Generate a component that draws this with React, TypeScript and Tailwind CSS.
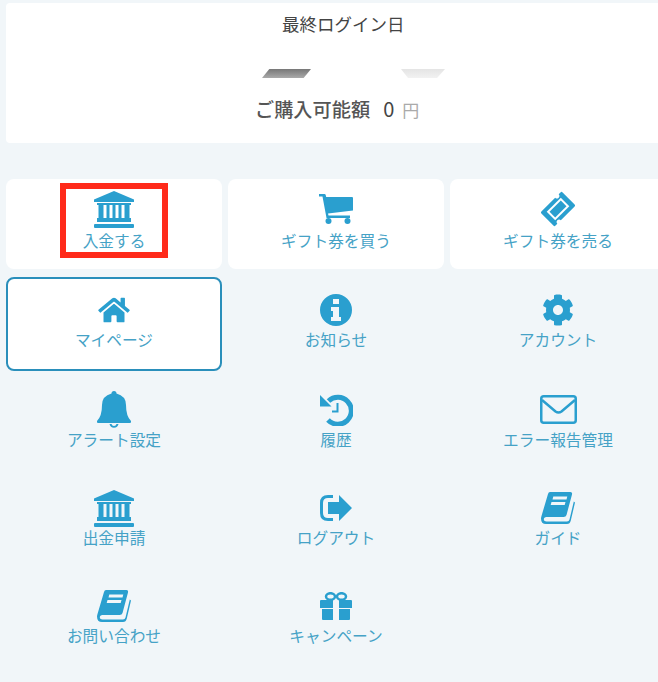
import type { ReactNode } from "react";
import { FaCog, FaHome } from "react-icons/fa";

const UniversityIcon = () => (
  <svg viewBox="0 0 40 37" className="h-[37px] w-[40px] fill-[#2a9fcf]">
    <path d="M20 0 40 8.500V11H0V8.500Z" />
    <path
      fillRule="evenodd"
      d="M3 12H37V14H35.500V27H37V31H3V27H4.500V14H3ZM9.500 14V27H12.500V14ZM15.500 14V27H18.500V14ZM21.500 14V27H24.500V14ZM27.500 14V27H30.500V14Z"
    />
    <rect x="0" y="33" width="40" height="4" rx="1" />
  </svg>
);

const CartIcon = () => (
  <svg viewBox="0 0 34 30" className="h-[30px] w-[34px] fill-[#2a9fcf]">
    <path d="M0 0H5.500Q6.500 0 6.700 1L7.200 3H33Q34 3 34 4V16.500L9 19.500 9.500 21.500H31V24H7.500L3.500 2.500H0Z" />
    <circle cx="9.500" cy="27" r="3" />
    <circle cx="28.500" cy="27" r="3" />
  </svg>
);

const TicketIcon = () => (
  <svg viewBox="0 0 36 36" className="h-[36px] w-[36px]">
    <g transform="rotate(-45 18 18)">
      <path
        d="M3 9.500A1.500 1.500 0 0 1 4.500 8H24a2.500 2.500 0 0 0 5 0H31.500A1.500 1.500 0 0 1 33 9.500V26.500A1.500 1.500 0 0 1 31.500 28H12a2.500 2.500 0 0 0-5 0H4.500A1.500 1.500 0 0 1 3 26.500Z"
        className="fill-[#2a9fcf]"
      />
      <rect x="8" y="12" width="20" height="12" className="fill-[#ffffff]" />
      <rect x="10" y="14" width="16" height="8" className="fill-[#2a9fcf]" />
    </g>
  </svg>
);

const BookIcon = () => (
  <svg viewBox="0 0 34 32" className="h-[32px] w-[34px] fill-[#2a9fcf]">
    <path
      fillRule="evenodd"
      d="M9 0H29.500Q31.500 0 31 2.500L25.500 23Q25 25 22.500 25H5.500Q2.800 25 2.800 27.500 2.800 29.500 5.500 29.500H26Q28 29.500 28.500 27.500L32.800 9.500 34 10.500 29.800 28.500Q29 32 26 32H5Q0 32 0 26.500 0 25.500 .5 24L7 2Q7.500 0 9 0ZM12.300 4.500 11.500 7.500H25.500L26.300 4.500ZM10.500 10 9.700 13H23.700L24.500 10Z"
    />
  </svg>
);

const SignOutIcon = () => (
  <svg viewBox="0 0 32 26" className="h-[26px] w-[32px] fill-[#2a9fcf]">
    <path d="M8 0H13V3H8Q3 3 3 8V18Q3 23 8 23H13V26H8Q0 26 0 18V8Q0 0 8 0Z" />
    <path d="M19 0 32 13 19 26V19H8V7H19Z" />
  </svg>
);

const EnvelopeIcon = () => (
  <svg viewBox="0 0 37 29" className="h-[29px] w-[37px] fill-none stroke-[#2a9fcf]">
    <rect x="1.250" y="1.250" width="34.500" height="26.500" rx="2.500" strokeWidth="2.500" />
    <path d="M2 5 15.500 16.500Q18.500 18.500 21.500 16.500L35 5" strokeWidth="2.500" />
  </svg>
);

const InfoIcon = () => (
  <svg viewBox="0 0 32 32" className="h-[32px] w-[32px] fill-[#2a9fcf]">
    <path
      fillRule="evenodd"
      d="M16 0A16 16 0 1 1 16 32 16 16 0 0 1 16 0ZM13 5V10H19V5ZM11 13V17H13V23H11V27H21V23H19V13Z"
    />
  </svg>
);

const BellIcon = () => (
  <svg viewBox="0 0 34 37" className="h-[37px] w-[34px] fill-[#2a9fcf]">
    <path d="M17 0A2.500 2.500 0 0 1 19.500 2.500Q29 5 29 14 29 25 34 30V31Q34 32 33 32H1Q0 32 0 31V30Q5 25 5 14 5 5 14.500 2.500A2.500 2.500 0 0 1 17 0Z" />
    <path d="M12.500 33H14.500A2.600 2.600 0 0 0 19.500 33H21.500A4.600 4.600 0 0 1 12.500 33Z" />
  </svg>
);

const HistoryIcon = () => (
  <svg viewBox="0 0 33 33" className="h-[33px] w-[33px] fill-none stroke-[#2a9fcf]">
    <path d="M8.500 8A13.500 13.500 0 1 1 8 27" strokeWidth="5" />
    <path d="M0 2 11.500 13.500H0Z" className="fill-[#2a9fcf] stroke-none" />
    <path d="M17.500 10V18.500H12" strokeWidth="2" />
  </svg>
);

const GiftIcon = () => (
  <svg viewBox="0 0 32 28" className="h-[28px] w-[32px] fill-[#2a9fcf]">
    <ellipse cx="10.500" cy="4.500" rx="4.500" ry="3.300" className="fill-none stroke-[#2a9fcf]" strokeWidth="2.500" />
    <ellipse cx="21.500" cy="4.500" rx="4.500" ry="3.300" className="fill-none stroke-[#2a9fcf]" strokeWidth="2.500" />
    <path d="M1 8H13V16H0V9Q0 8 1 8ZM19 8H31Q32 8 32 9V16H19Z" />
    <path d="M2 17H13V28H3Q2 28 2 27ZM19 17H30V27Q30 28 29 28H19Z" />
  </svg>
);

type Item = { label: string; icon: ReactNode };

const rows: { className: string; labelClass: string; items: Item[] }[] = [
  {
    className: "mt-[36px] h-[90px]",
    labelClass: "mt-0.5",
    items: [
      { label: "入金する", icon: <UniversityIcon /> },
      { label: "ギフト券を買う", icon: <CartIcon /> },
      { label: "ギフト券を売る", icon: <TicketIcon /> },
    ],
  },
  {
    className: "mt-2 h-[94px]",
    labelClass: "",
    items: [
      { label: "マイページ", icon: <FaHome className="h-[28px] w-[34px]" /> },
      { label: "お知らせ", icon: <InfoIcon /> },
      { label: "アカウント", icon: <FaCog className="h-[32px] w-[32px]" /> },
    ],
  },
  {
    className: "h-[99px]",
    labelClass: "mt-px",
    items: [
      { label: "アラート設定", icon: <BellIcon /> },
      { label: "履歴", icon: <HistoryIcon /> },
      { label: "エラー報告管理", icon: <EnvelopeIcon /> },
    ],
  },
  {
    className: "h-[98px]",
    labelClass: "",
    items: [
      { label: "出金申請", icon: <UniversityIcon /> },
      { label: "ログアウト", icon: <SignOutIcon /> },
      { label: "ガイド", icon: <BookIcon /> },
    ],
  },
  {
    className: "h-[98px]",
    labelClass: "",
    items: [
      { label: "お問い合わせ", icon: <BookIcon /> },
      { label: "キャンペーン", icon: <GiftIcon /> },
    ],
  },
];

export default function App() {
  return (
    <div className="relative h-[682px] w-[658px] overflow-hidden bg-[#f1f6f9] pl-1.5 pt-[3px] font-['Noto_Sans_CJK_JP','Noto_Sans',sans-serif]">
      <section className="flex h-[140px] w-[660px] flex-col rounded bg-white">
        <p className="mt-[9px] pl-[276px] text-[17.500px] leading-[24px] text-[#444]">最終ログイン日</p>
        <div className="mt-[33px] flex pl-[256px]">
          <div className="h-[9px] w-[49px] bg-gradient-to-b from-[#777] to-[#aaa] [clip-path:polygon(15%_0,100%_0,85%_100%,0_100%)]" />
          <div className="ml-[90px] h-[9px] w-[44px] bg-gradient-to-b from-[#e4e4e4] to-[#f2f2f2] [clip-path:polygon(0_0,100%_0,82%_100%,16%_100%)]" />
        </div>
        <div className="mt-[17px] flex items-baseline pl-[249px] leading-[28px]">
          <span className="text-[19.200px] font-medium text-[#555]">ご購入可能額</span>
          <span className="ml-[13px] text-[20px] text-[#444]">0</span>
          <span className="ml-[8px] text-[17px] text-[#aaa]">円</span>
        </div>
      </section>

      {rows.map((row, r) => (
        <div key={r} className={`grid grid-cols-[216px_216px_216px] gap-x-1.5 ${row.className}`}>
          {row.items.map((item, i) => {
            let box = "pt-5";
            if (r === 0) box = "rounded-lg bg-white pt-3";
            if (r === 1) box = i === 0 ? "rounded-lg border-2 border-[#2a8fbb] bg-white pt-[13px]" : "pt-[15px]";
            return (
              <div key={item.label} className={`flex flex-col items-center ${box}`}>
                <div className="flex h-9 items-center justify-center text-[#2a9fcf]">{item.icon}</div>
                <span className={`text-[15.700px] leading-[24px] text-[#45a2c6] ${row.labelClass}`}>{item.label}</span>
              </div>
            );
          })}
        </div>
      ))}

      <div className="absolute left-[60px] top-[183px] h-[75px] w-[108px] border-[6px] border-[#ff2a1a]" />
    </div>
  );
}
